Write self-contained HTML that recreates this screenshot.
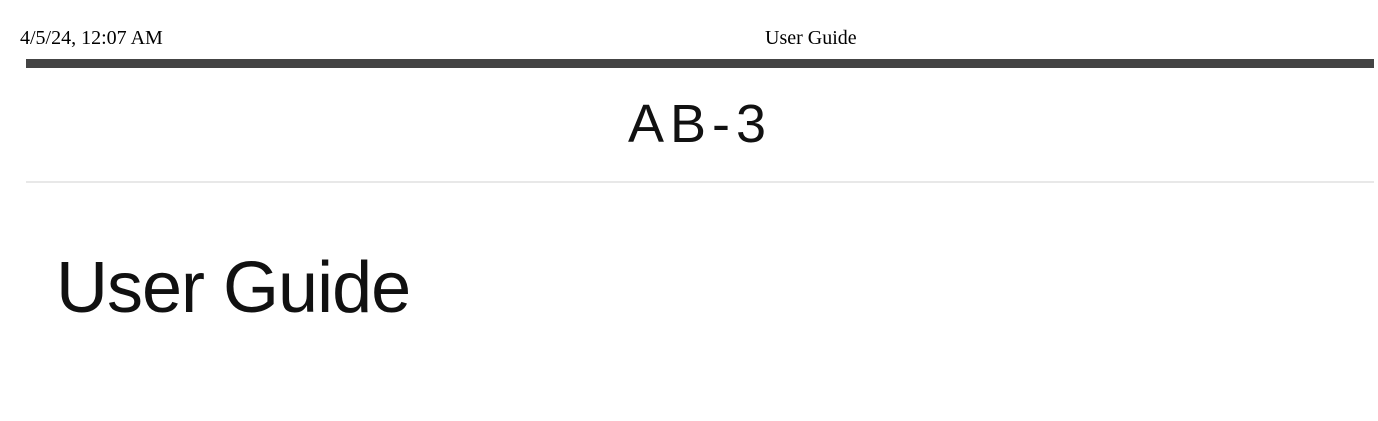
<!DOCTYPE html>
<html><head><meta charset="utf-8"><style>
html,body{margin:0;padding:0;background:#fff;width:1378px;height:421px;overflow:hidden;position:relative}
.t{position:absolute;font-family:"Liberation Serif",serif;font-size:20px;color:#000;top:27px;line-height:22px}
.bar{position:absolute;left:26px;top:59px;width:1348px;height:9px;background:#444}
.ab{position:absolute;left:0;width:1400px;text-align:center;top:88px;font-family:"Liberation Sans",sans-serif;font-size:54px;line-height:72px;letter-spacing:6px;color:#111}
.hr{position:absolute;left:26px;top:181px;width:1348px;height:2px;background:#e8e8e8}
.h1{position:absolute;left:56px;top:238px;font-family:"Liberation Sans",sans-serif;font-size:72px;line-height:100px;letter-spacing:-1px;color:#111}
</style></head><body>
<div class="t" style="left:20px">4/5/24, 12:07 AM</div>
<div class="t" style="left:765px">User Guide</div>
<div class="bar"></div>
<div class="ab">AB-3</div>
<div class="hr"></div>
<div class="h1">User Guide</div>
</body></html>
